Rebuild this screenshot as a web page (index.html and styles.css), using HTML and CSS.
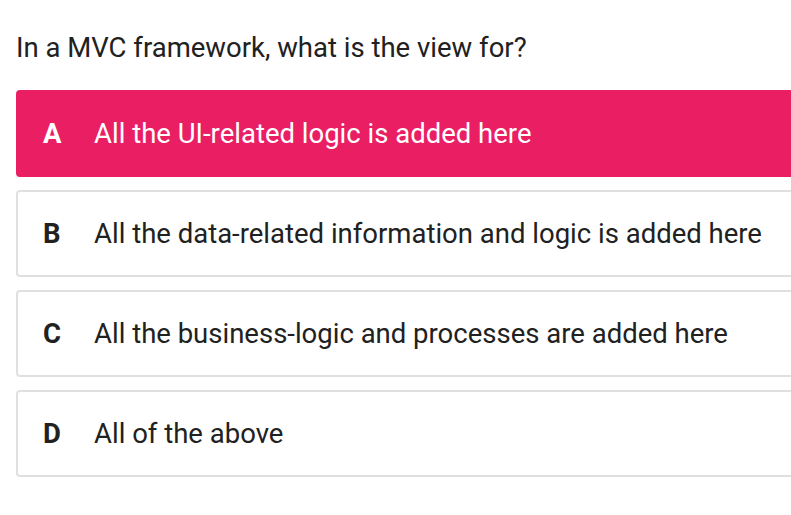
FILE: index.html
```html
<!DOCTYPE html>
<html lang="en">
<head>
<meta charset="utf-8">
<title>Quiz</title>
<link rel="stylesheet" href="styles.css">
</head>
<body>
<main class="quiz">
  <p class="question">In a MVC framework, what is the view for?</p>
  <ul class="options">
    <li class="option selected"><span class="label">A</span><span class="text">All the UI-related logic is added here</span></li>
    <li class="option"><span class="label">B</span><span class="text">All the data-related information and logic is added here</span></li>
    <li class="option"><span class="label">C</span><span class="text">All the business-logic and processes are added here</span></li>
    <li class="option"><span class="label">D</span><span class="text">All of the above</span></li>
  </ul>
</main>
</body>
</html>
```
FILE: styles.css
```css
html, body {
  margin: 0;
  padding: 0;
  background: #ffffff;
  overflow: hidden;
}
body {
  font-family: Roboto, "Liberation Sans", sans-serif;
  color: #212121;
}
.quiz {
  padding: 30px 0 0 16px;
  width: 800px;
}
.question {
  margin: 0 0 24px 0;
  font-size: 27.5px;
  line-height: 36px;
}
.options {
  list-style: none;
  margin: 0;
  padding: 0;
  display: flex;
  flex-direction: column;
  gap: 13px;
}
.option {
  display: flex;
  align-items: center;
  height: 87px;
  box-sizing: border-box;
  border: 2px solid #e0e0e0;
  border-radius: 4px;
  padding-left: 25px;
  font-size: 27.5px;
  background: #fff;
}
.option.selected {
  background: #e91e63;
  border-color: #e91e63;
  color: #ffffff;
}
.label {
  font-weight: 700;
  width: 51px;
}
```
